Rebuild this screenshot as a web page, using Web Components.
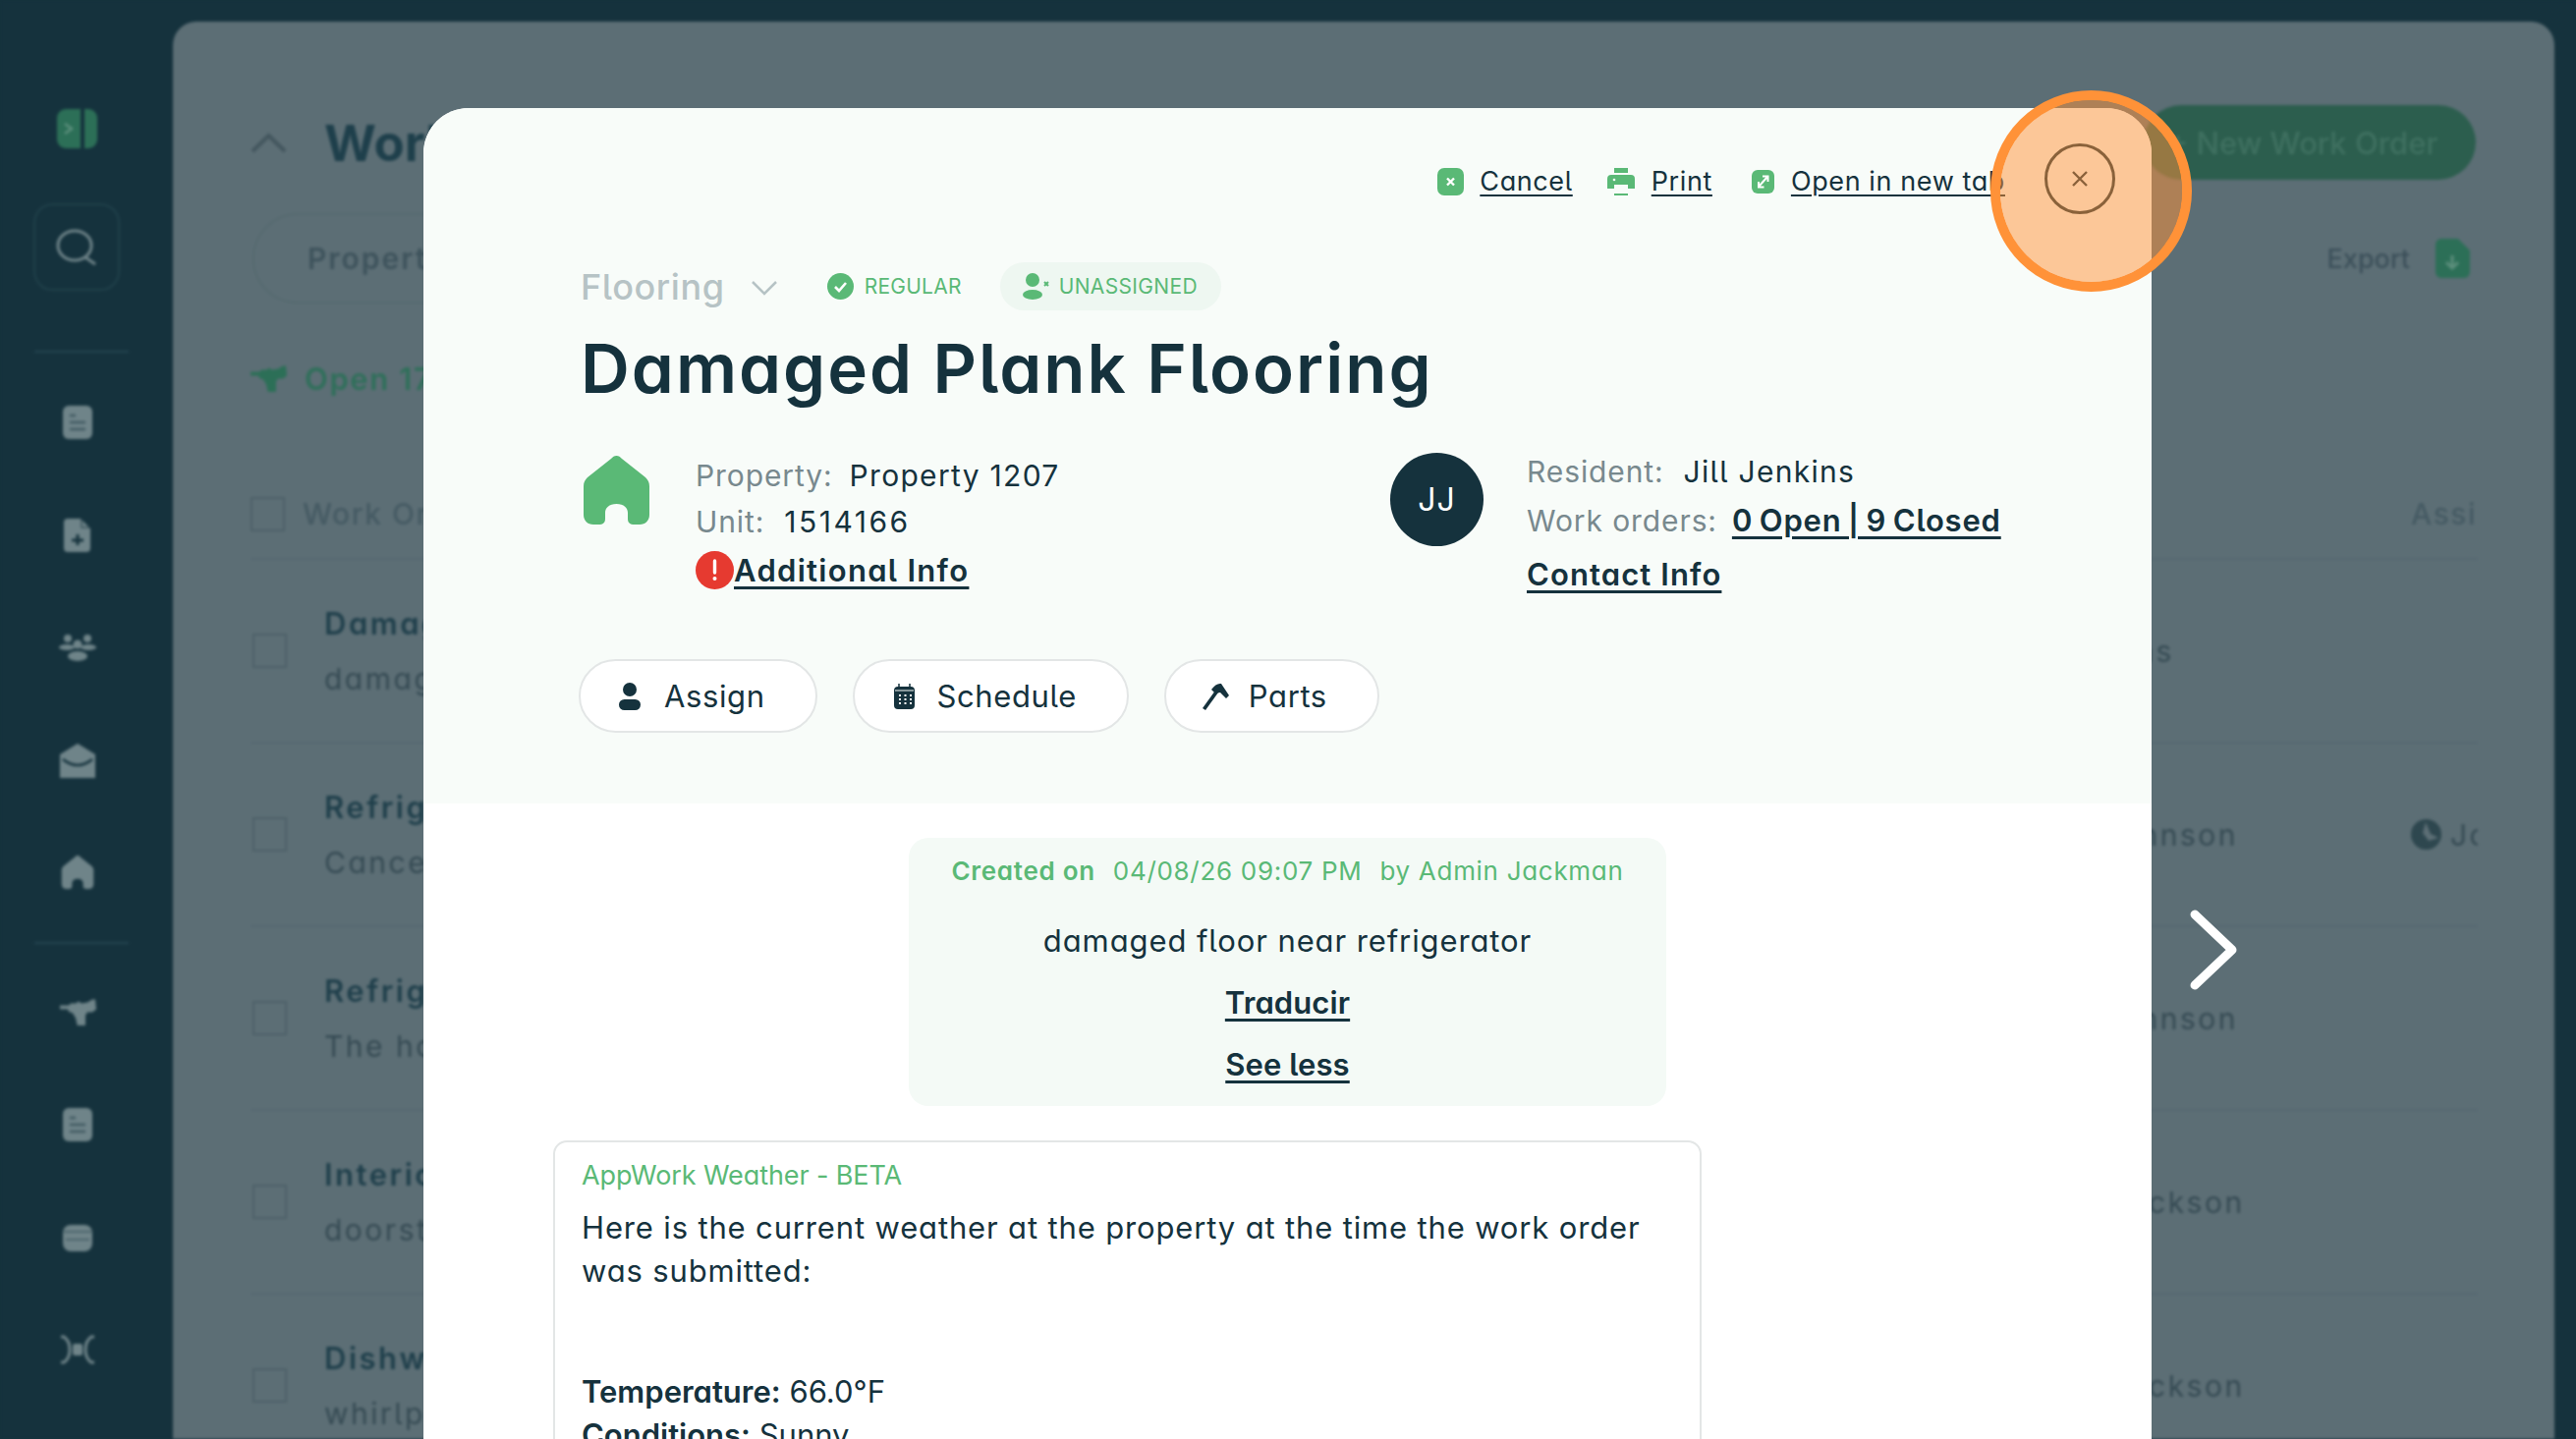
<!DOCTYPE html>
<html lang="en"><head><meta charset="utf-8"><title>Work Orders</title>
<style>
html,body{margin:0;padding:0;height:100%;overflow:hidden;background:#15323d}
body{font-family:Inter,"Noto Sans",sans-serif;font-feature-settings:"cv11","cv05";color:#15323d}
</style></head>
<body>
<app-shell>
  <side-nav></side-nav>
  <orders-panel></orders-panel>
</app-shell>
<detail-modal></detail-modal>
<next-arrow></next-arrow>
<focus-ring></focus-ring>
<script>
const GREEN='#5ab976';
const ICO='#6f8489';
function def(name,html){
  customElements.define(name,class extends HTMLElement{
    constructor(){super();const t=document.createElement('template');t.innerHTML=html;this.attachShadow({mode:'open'}).appendChild(t.content.cloneNode(true));}
  });
}
const DRILL=c=>`<svg width="37" height="27" viewBox="0 0 37 27"><path d="M0 6.500h9l2-2h5l3-2 3 2 6-1 5-3h3l1 10-4 3h-5l-2 3v10l-2 2h-6l-2-9-3-5-5-2H9l-1-2H0z" fill="${c}"/></svg>`;
const HOUSE=c=>`<path d="M33.500 0C36 0 37 1 39 3L63 22C65.500 24.500 67 27 67 31V60C67 66 63 70 57 70H52C47 70 45 68 45 64V58C45 53 41 49 33.500 49C26 49 22 53 22 58V64C22 68 20 70 15 70H10C4 70 0 66 0 60V31C0 27 1.500 24.500 4 22L28 3C30 1 31 0 33.500 0Z" fill="${c}"/>`;
const IC={
 doc:`<svg width="32" height="36" viewBox="0 0 32 36"><rect x="1" y="1" width="30" height="34" rx="6" fill="${ICO}"/><path d="M8 11h6M8 18h16M8 25h16" stroke="#15323d" stroke-width="2.400" opacity=".5"/></svg>`,
 docplus:`<svg width="28" height="36" viewBox="0 0 28 36"><path d="M4 1h13l10 10v20a4 4 0 0 1-4 4H4a4 4 0 0 1-4-4V5a4 4 0 0 1 4-4z" fill="${ICO}"/><path d="M14 17v11M8 23h12" stroke="#15323d" stroke-width="3"/><path d="M18 1v9h9" fill="none" stroke="#15323d" stroke-width="1.500" opacity=".6"/></svg>`,
 people:`<svg width="38" height="30" viewBox="0 0 38 30"><g fill="${ICO}"><circle cx="9" cy="6" r="4"/><circle cx="29" cy="6" r="4"/><circle cx="19" cy="12" r="4.500"/><ellipse cx="8" cy="15" rx="8" ry="3"/><ellipse cx="30" cy="15" rx="8" ry="3"/><ellipse cx="19" cy="24" rx="10" ry="5"/></g></svg>`,
 mail:`<svg width="38" height="36" viewBox="0 0 38 36"><path d="M19 1 37 12v24H1V12z" fill="${ICO}"/><path d="M4 17q15 12 30 0" fill="none" stroke="#15323d" stroke-width="2.400"/></svg>`,
 home:`<svg width="34" height="34" viewBox="0 0 67 70">${HOUSE(ICO)}</svg>`,
 drill:DRILL(ICO),
 cal:`<svg width="32" height="30" viewBox="0 0 32 30"><rect x="1" y="2" width="30" height="27" rx="8" fill="${ICO}"/><path d="M2 9h28M4 17h24" stroke="#15323d" stroke-width="1.500" opacity=".5"/></svg>`,
 scan:`<svg width="38" height="30" viewBox="0 0 38 30"><g fill="none" stroke="${ICO}" stroke-width="3"><path d="M2 2h3q6 4 6 13T5 28H2M36 2h-3q-6 4-6 13t6 13h3"/></g><rect x="14" y="9" width="10" height="12" rx="2" fill="${ICO}"/></svg>`
};
def('app-shell',`<style>:host{display:flex;align-items:flex-start;width:2622px;height:1465px;overflow:hidden;background:#15323d;filter:blur(1.8px)}</style><slot></slot>`);
def('nav-item',`<style>:host{display:flex;height:114.500px;width:100%;align-items:center;justify-content:center;padding-left:3px;box-sizing:border-box}</style><slot></slot>`);
def('side-nav',`<style>
:host{display:flex;flex:none;flex-direction:column;align-items:center;width:176px;height:1465px;padding:111px 21px 0 0;box-sizing:border-box}
.logo{width:41px;height:40px;border-radius:9px;background:#2c6f57;display:flex;overflow:hidden;margin-left:1px}
.logo b{width:24px;display:flex;align-items:center;justify-content:center}.logo i{width:4px;background:#15323d}
.search{width:88px;height:89px;margin-top:56px;border:2px solid #20404a;border-radius:20px;box-sizing:border-box;display:flex;align-items:center;justify-content:center}
hr{width:96px;height:2px;border:0;margin:0;background:#234450;align-self:flex-start;margin-left:35px}
.a{margin-top:61px;margin-bottom:14px}.b{margin-top:13px;margin-bottom:13px}
</style>
<div class="logo"><b><svg width="12" height="14" viewBox="0 0 12 14"><path d="m2 2 7 5-7 5" fill="none" stroke="#5c8f7c" stroke-width="2.500"/></svg></b><i></i></div>
<div class="search"><svg width="42" height="42" viewBox="0 0 42 42"><ellipse cx="19" cy="19" rx="17" ry="15" fill="none" stroke="${ICO}" stroke-width="3"/><path d="m30 31 10 7" stroke="${ICO}" stroke-width="3"/></svg></div>
<hr class="a">
<nav-item>${IC.doc}</nav-item><nav-item>${IC.docplus}</nav-item><nav-item>${IC.people}</nav-item><nav-item>${IC.mail}</nav-item><nav-item>${IC.home}</nav-item>
<hr class="b">
<nav-item>${IC.drill}</nav-item><nav-item>${IC.doc}</nav-item><nav-item>${IC.cal}</nav-item><nav-item>${IC.scan}</nav-item>`);
def('order-row',`<style>
:host{display:grid;grid-template-columns:73px 1675px 449px 68px;height:187px;align-items:center;padding-left:2px;border-bottom:2px solid #566871;box-sizing:border-box;overflow:hidden;width:2267px}
.c{width:35px;height:35px;border:2px solid #4d6068;box-sizing:border-box}
.t{font-weight:600;font-size:31px;letter-spacing:2.500px;color:#1f3f4b;line-height:57px}
.s{font-size:30px;letter-spacing:2.500px;color:#354a53;line-height:57px}
.n{font-size:30px;letter-spacing:2.500px;color:#354a53;white-space:nowrap}
.a{display:flex;align-items:center;gap:9px;font-size:30px;letter-spacing:2.500px;color:#354a53;white-space:nowrap;overflow:hidden}
</style><span class="c"></span><div><div class="t"><slot name="t"></slot></div><div class="s"><slot name="s"></slot></div></div><div class="n"><slot name="n"></slot></div><div class="a"><slot name="av"></slot><slot name="a"></slot></div>`);
def('orders-panel',`<style>
:host{display:block;flex:none;width:2424px;height:1500px;margin-top:22px;background:#5c6e75;border-radius:24px;padding:85px 80px 0 79px;box-sizing:border-box;overflow:hidden}
.head,.filter{display:flex;align-items:center;justify-content:space-between}
.l{display:flex;align-items:center}
h1{margin:0 0 0 38px;font-size:51px;font-weight:700;color:#1e3f4b}
.new{width:338px;height:76px;border-radius:38px;background:#2c5e4e;color:#3f7060;font-size:31px;font-weight:500;display:flex;align-items:center;justify-content:center;box-sizing:border-box;padding-right:14px}
.filter{margin-top:34px;height:92px}
.pill{width:400px;height:92px;margin-left:2px;border:2px solid #566a70;border-radius:46px;box-sizing:border-box;padding-left:54px;display:flex;align-items:center;font-weight:600;font-size:30px;letter-spacing:2px;color:#3e535c}
.ex{display:flex;align-items:center;gap:26px;font-size:27px;font-weight:500;color:#3c505a;margin-right:6px}
.open{display:flex;align-items:center;gap:18px;margin-top:59px;height:34px;color:#2f6f5a;font-size:31px;font-weight:600;letter-spacing:1.600px}
.th{display:grid;grid-template-columns:53px 2146px 68px;align-items:center;width:2267px;margin-top:97px;height:48px;padding-bottom:21px;border-bottom:2px solid #566871;font-size:30px;letter-spacing:1.500px;color:#455a63;font-weight:500;overflow:hidden}
.th i{display:block;width:35px;height:35px;border:2px solid #4d6068;box-sizing:border-box}
.th span:last-child{overflow:hidden;white-space:nowrap}
</style>
<div class="head"><div class="l"><svg width="37" height="22" viewBox="0 0 37 22"><path d="M2 20 18.500 4 35 20" fill="none" stroke="#43565e" stroke-width="4"/></svg><h1>Work Orders</h1></div><div class="new">+ New Work Order</div></div>
<div class="filter"><div class="pill">Properties</div><div class="ex">Export<svg width="35" height="40" viewBox="0 0 35 40"><path d="M6 0h17l12 12v22a6 6 0 0 1-6 6H6a6 6 0 0 1-6-6V6a6 6 0 0 1 6-6z" fill="#2c6f57"/><path d="M17 17v12m-6-5 6 6 6-6" stroke="#5c8f7c" fill="none" stroke-width="3"/></svg></div></div>
<div class="open">${DRILL('#2c6f57')}Open 17</div>
<div class="th"><i></i><span>Work Orders</span><span>Assigned</span></div>
<order-row><span slot="t">Damaged Plank Flooring</span><span slot="s">damaged floor near refrigerator</span><span slot="n">Jilly Jenkins</span></order-row>
<order-row><span slot="t">Refrigerator</span><span slot="s">Cancelled</span><span slot="n">Samuel Johnson</span><svg slot="av" width="31" height="31" viewBox="0 0 31 31" style="flex:none"><circle cx="15.500" cy="15.500" r="15.500" fill="#2e474f"/><path d="M15 3l5 12 8 4-10 3-6-8z" fill="#5c6e75"/></svg><span slot="a">Jordan</span></order-row>
<order-row><span slot="t">Refrigerator</span><span slot="s">The house</span><span slot="n">Samuel Johnson</span></order-row>
<order-row><span slot="t">Interior</span><span slot="s">doorstop</span><span slot="n">Thomas Jackson</span></order-row>
<order-row><span slot="t">Dishwasher</span><span slot="s">whirlpool</span><span slot="n">Thomas Jackson</span></order-row>`);

/* modal */
def('action-link',`<style>:host{display:inline-flex;align-items:center;font-size:27px;font-weight:400;color:#15323d;letter-spacing:.6px;margin-top:5px}
a{color:inherit;text-decoration:underline;text-decoration-thickness:2px;text-underline-offset:4px;cursor:pointer}slot[name=i]{display:flex}</style><slot name="i"></slot><a><slot></slot></a>`);
def('pill-button',`<style>:host{display:inline-flex;align-items:center;height:75px;box-sizing:border-box;background:#fff;border:2px solid #e3e6e6;border-radius:38px;font-size:31px;letter-spacing:.6px;font-weight:400;color:#15323d;padding-right:51px}slot[name=i]{display:flex}</style><slot name="i"></slot><slot></slot>`);
def('info-line',`<style>:host{display:block;font-size:30px;white-space:nowrap;color:#15323d;letter-spacing:1.300px}
.l{color:#78898e;margin-right:20px;letter-spacing:.9px}</style><span class="l"><slot name="l"></slot></span><slot></slot>`);
def('u-link',`<style>:host{font-weight:600;font-size:31px;letter-spacing:1.100px;color:#15323d}a{color:inherit;text-decoration:underline;text-decoration-thickness:3px;text-underline-offset:5px}</style><a><slot></slot></a>`);
def('note-box',`<style>:host{display:block;width:771px;height:273px;margin-left:362px;background:#f4faf6;border-radius:20px;text-align:center;box-sizing:border-box;padding-top:14px}
.m{display:flex;justify-content:center;gap:18px;color:${GREEN};font-size:26px;letter-spacing:.7px;line-height:40px;white-space:nowrap}b{font-weight:600}
p{margin:0;font-size:31px;letter-spacing:.9px;line-height:44px;color:#15323d}p.f{margin-top:29px}
.lk{margin-top:19px}.lk u-link{letter-spacing:.1px}
</style><div class="m"><b>Created on</b><span>04/08/26 09:07 PM</span><span>by Admin Jackman</span></div>
<p class="f">damaged floor near refrigerator</p><p class="lk"><u-link>Traducir</u-link></p><p class="lk"><u-link>See less</u-link></p>`);
def('weather-card',`<style>:host{display:block;width:1169px;height:400px;margin-top:35px;background:#fff;border:2px solid #e3e6e6;border-radius:14px 14px 0 0;box-sizing:border-box;padding:14px 27px}
.h{color:${GREEN};font-size:27px;line-height:40px;letter-spacing:-.1px}
p{margin:0;font-size:31px;line-height:44px;color:#15323d}.gap{margin-top:11px;letter-spacing:.85px}.sp{height:79px}b{font-weight:600}
</style><div class="h">AppWork Weather - BETA</div><p class="gap">Here is the current weather at the property at the time the work order<br>was submitted:</p><div class="sp"></div><p><b>Temperature:</b> 66.0°F</p><p><b>Conditions:</b> Sunny</p>`);
def('detail-modal',`<style>
:host{position:absolute;left:431px;top:110px;width:1759px;height:1400px;border-radius:46px 46px 0 0;overflow:hidden;background:#fff;display:block}
.head{background:#f8fcf9;height:708px;box-sizing:border-box;padding:36px 37px 0 160px}
.acts{display:flex;justify-content:flex-end;align-items:center;height:72px;white-space:nowrap}
.close{width:72px;height:72px;border:3px solid #15323d;border-radius:50%;box-sizing:border-box;display:flex;align-items:center;justify-content:center;margin-left:40px}
.cat{display:flex;align-items:center;height:49px;margin-top:49px;white-space:nowrap}
.cat .fl{font-size:36px;font-weight:500;color:#b6c3c5;letter-spacing:.6px}
.tag{display:flex;align-items:center;gap:11px;color:${GREEN};font-size:21px;letter-spacing:.25px}
.un{margin-left:39px;height:49px;width:225px;border-radius:25px;background:#eef7f1;padding-left:22px;box-sizing:border-box;gap:9px;letter-spacing:.35px}
h2{margin:15px 0 0;font-size:69px;line-height:88px;font-weight:600;color:#15323d;white-space:nowrap;letter-spacing:2px}
.info{display:grid;grid-template-columns:824px 1fr;margin-top:29px}
.prop{display:flex;align-items:flex-start}.prop>svg{margin-top:16px;margin-left:3px}
.lines{margin-left:47px;padding-top:13px;line-height:47px}
.add{display:flex;align-items:flex-start;line-height:50px;margin-top:1px}
.add svg{margin-top:5px}
.res{display:flex;align-items:flex-start}.res .av{width:95px;height:95px;border-radius:50%;background:#15323d;color:#fff;font-size:32px;display:flex;align-items:center;justify-content:center;margin-top:13px;letter-spacing:1px}
.rl{margin-left:44px;padding-top:7px;line-height:50px}.rl .c{margin-top:5px}
.btns{display:flex;gap:36px;margin:56px 0 0 -2px}
.body{padding:35px 0 0 132px}
</style>
<div class="head">
 <div class="acts">
  <action-link style="margin-right:35px"><svg slot="i" width="27" height="28" viewBox="0 0 27 28" style="margin-right:16px"><rect width="27" height="28" rx="7" fill="${GREEN}"/><path d="m10 10.500 7 7m0-7-7 7" stroke="#fff" stroke-width="2.400"/></svg>Cancel</action-link>
  <action-link style="margin-right:40px"><svg slot="i" width="28" height="28" viewBox="0 0 28 28" style="margin-right:17px"><path d="M7 0h14v7h3a4 4 0 0 1 4 4v10h-7v7H7v-7H0V11a4 4 0 0 1 4-4h3z" fill="${GREEN}"/><path d="M7 6h14M8 18h12v7H8z" stroke="#f8fcf9" stroke-width="2" fill="#f8fcf9"/><circle cx="7" cy="12" r="1.300" fill="#fff"/></svg>Print</action-link>
  <action-link><svg slot="i" width="23" height="24" viewBox="0 0 23 24" style="margin-right:17px"><rect width="23" height="24" rx="6" fill="${GREEN}"/><path d="m7 17 9-10M11 6.500h5.500v5.500M7 12v5.500h5.500" fill="none" stroke="#fff" stroke-width="2"/></svg>Open in new tab</action-link>
  <div class="close"><svg width="18" height="18" viewBox="0 0 18 18"><path d="m2 2 14 14M16 2 2 16" stroke="#15323d" stroke-width="2.400"/></svg></div>
 </div>
 <div class="cat"><span class="fl">Flooring</span>
  <svg width="26" height="15" viewBox="0 0 26 15" style="margin:3px 51px 0 27px"><path d="m1 1 12 12L25 1" fill="none" stroke="#b6c3c5" stroke-width="2.500"/></svg>
  <span class="tag"><svg width="27" height="27" viewBox="0 0 27 27"><circle cx="13.500" cy="13.500" r="13.500" fill="${GREEN}"/><path d="m8 14 4 4 7-8" fill="none" stroke="#fff" stroke-width="2.600"/></svg>REGULAR</span>
  <span class="tag un"><svg width="29" height="27" viewBox="0 0 29 27"><ellipse cx="11" cy="7" rx="7" ry="7" fill="${GREEN}"/><ellipse cx="11" cy="22" rx="10" ry="5" fill="${GREEN}"/><path d="m23 9 4 4m0-4-4 4" stroke="${GREEN}" stroke-width="2"/></svg>UNASSIGNED</span>
 </div>
 <h2>Damaged Plank Flooring</h2>
 <div class="info">
  <div class="prop"><svg width="67" height="70" viewBox="0 0 67 70">${HOUSE(GREEN)}</svg>
   <div class="lines"><info-line><span slot="l">Property:</span><span style="margin-left:-3px">Property 1207</span></info-line><info-line><span slot="l">Unit:</span><span style="letter-spacing:2.500px">1514166</span></info-line>
    <div class="add"><svg width="39" height="39" viewBox="0 0 39 39"><circle cx="19.500" cy="19.500" r="19.500" fill="#e63a30"/><path d="M19.500 10v12" stroke="#fff" stroke-width="3.400" stroke-linecap="round"/><circle cx="19.500" cy="28" r="2" fill="#fff"/></svg><u-link style="letter-spacing:1.300px">Additional Info</u-link></div></div></div>
  <div class="res"><div class="av">JJ</div>
   <div class="rl"><info-line><span slot="l">Resident:</span>Jill Jenkins</info-line><info-line><span slot="l">Work orders:</span><u-link style="letter-spacing:.8px;word-spacing:-2px;margin-left:-5px">0 Open | 9 Closed</u-link></info-line><div class="c"><u-link>Contact Info</u-link></div></div></div>
 </div>
 <div class="btns">
  <pill-button><svg slot="i" width="22" height="28" viewBox="0 0 22 28" style="margin:0 24px 0 39px"><ellipse cx="11" cy="7" rx="7" ry="7" fill="#15323d"/><rect y="17" width="22" height="11" rx="5.500" fill="#15323d"/></svg>Assign</pill-button>
  <pill-button><svg slot="i" width="21" height="26" viewBox="0 0 21 26" style="margin:0 23px 0 40px"><rect y="3" width="21" height="23" rx="4" fill="#15323d"/><path d="M5 0v5M16 0v5" stroke="#15323d" stroke-width="1.500"/><path d="M1 7h19" stroke="#f8fcf9" stroke-width="1"/><path d="M5 12h2m3.500 0h2m3.500 0h2M5 16h2m3.500 0h2m3.500 0h2M5 20h2m3.500 0h2m3.500 0h2" stroke="#fff" stroke-width="2"/></svg>Schedule</pill-button>
  <pill-button><svg slot="i" width="28" height="28" viewBox="0 0 28 28" style="margin:0 20px 0 36px"><path d="M1 26 14 8l3 2L4 28z" fill="#15323d"/><path d="M10 7q5-7 10-6l8 12-3 3-6-6-5 1z" fill="#15323d"/></svg>Parts</pill-button>
 </div>
</div>
<div class="body"><note-box></note-box><weather-card></weather-card></div>`);
def('next-arrow',`<style>:host{position:absolute;left:2228px;top:925px;display:block;width:50px;height:84px}</style><svg width="50" height="84" viewBox="0 0 50 84"><path d="m6 6 38 36L6 78" fill="none" stroke="#fff" stroke-width="9" stroke-linecap="round" stroke-linejoin="round"/></svg>`);
def('focus-ring',`<style>:host{position:absolute;left:2026px;top:92px;display:block;width:205px;height:205px;box-sizing:border-box;border:10px solid #ff9238;border-radius:50%;background:rgba(255,146,56,.5);background-clip:padding-box}</style>`);
</script>
</body></html>
